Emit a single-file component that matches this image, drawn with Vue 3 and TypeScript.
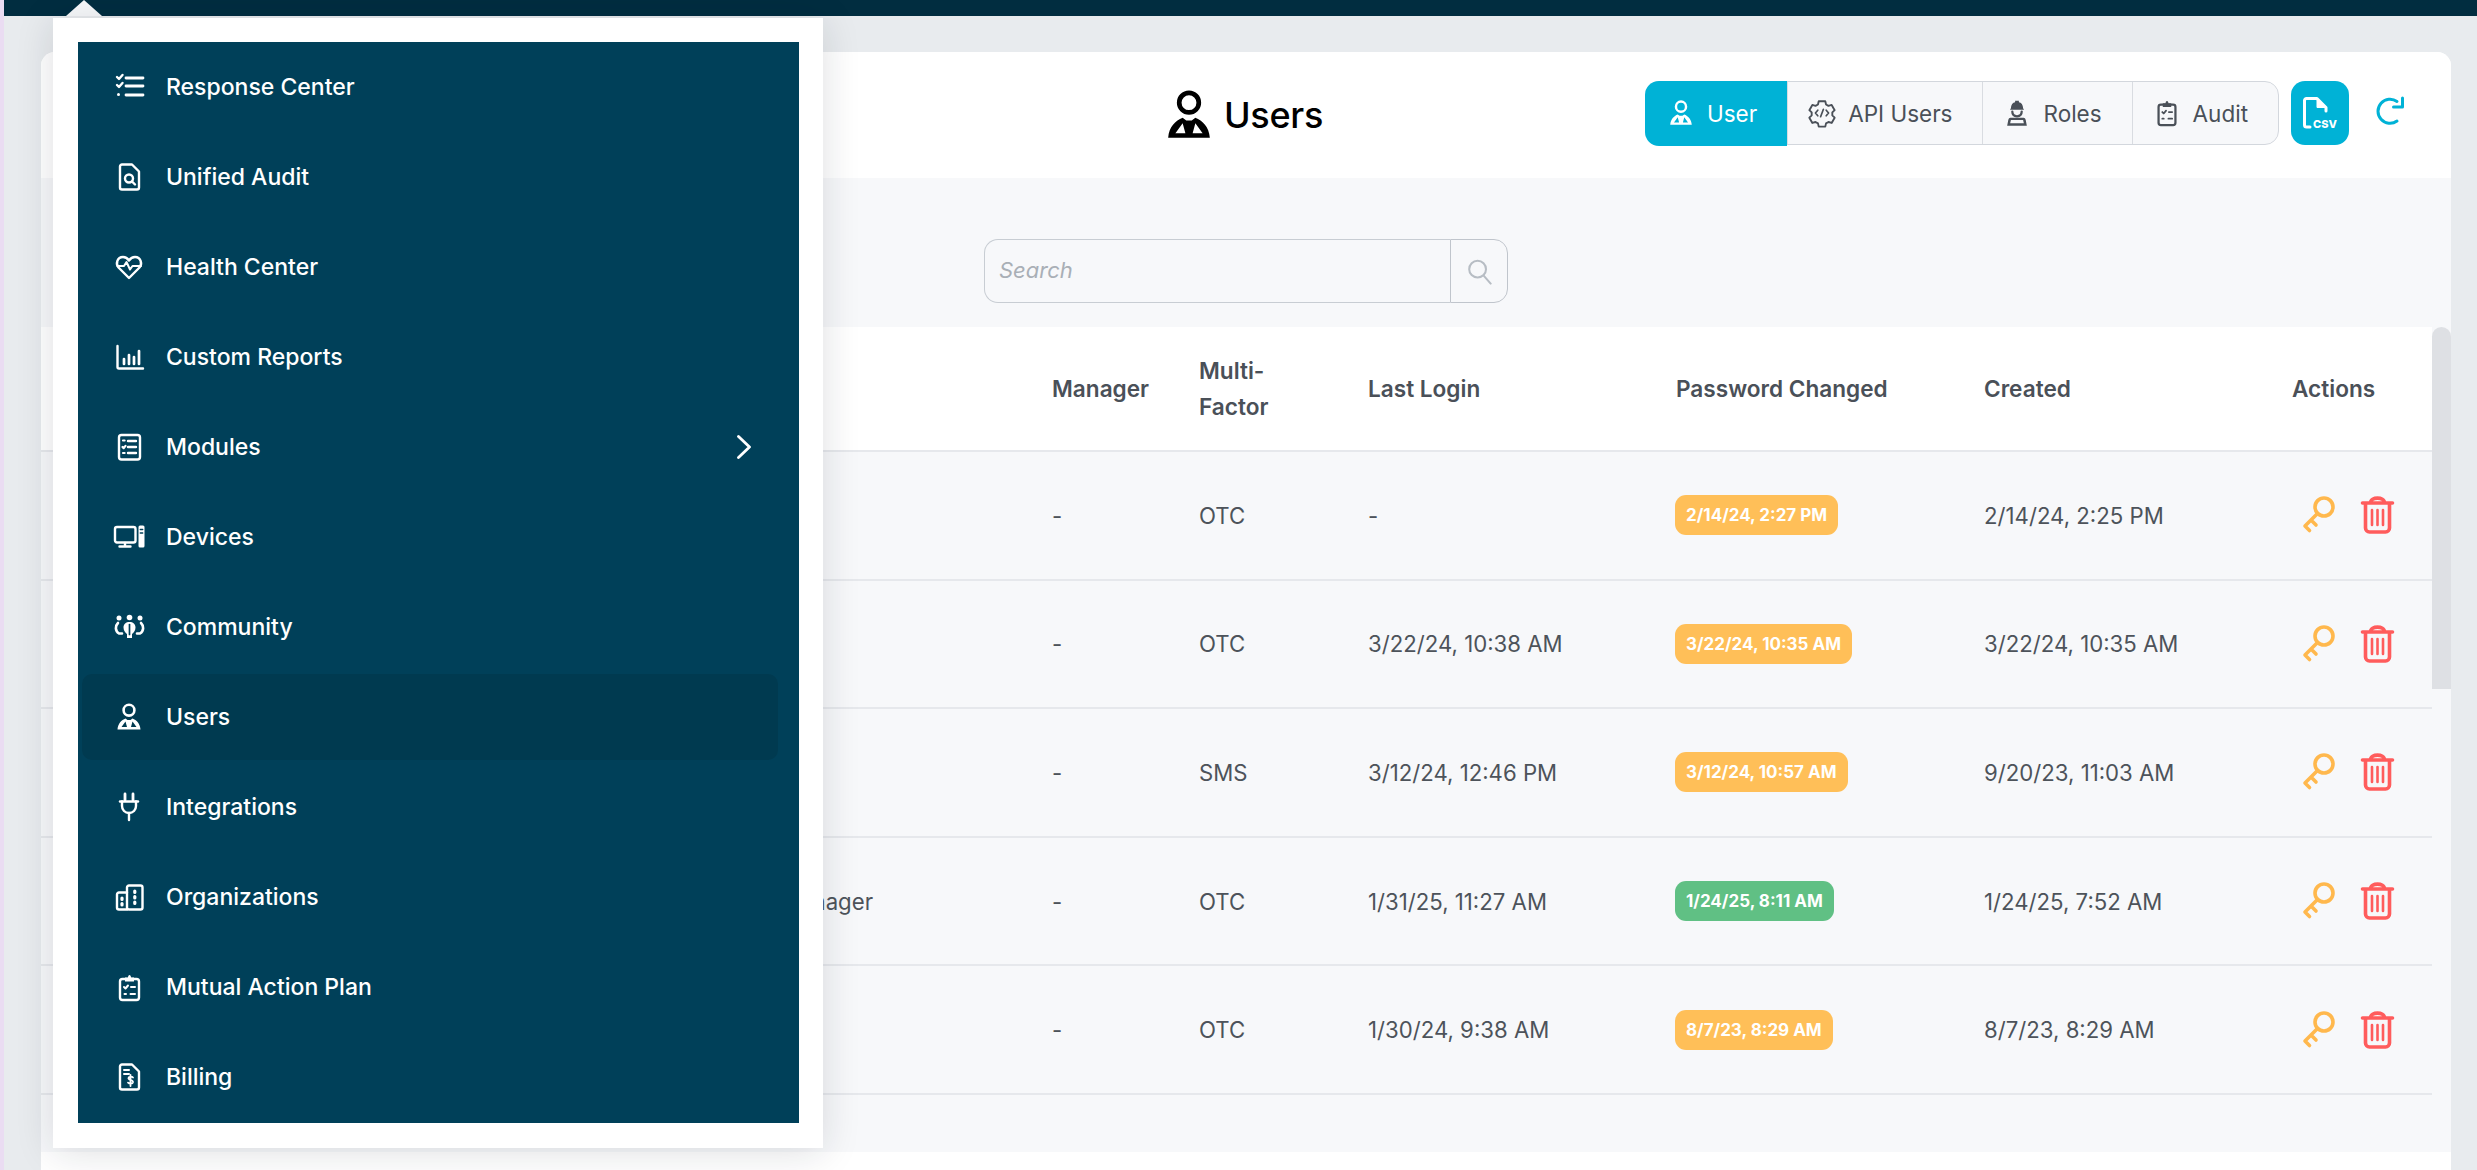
<script setup lang="ts">
const userIcon =
  '<circle cx="16" cy="9.200" r="5.400" stroke-width="2.600"/><path fill="currentColor" stroke="none" fill-rule="evenodd" d="M4.500 28.500C5 22.500 8.500 19 12.500 17.500L14.500 19h3l2-1.500C23.500 19 27 22.500 27.500 28.500zM8.500 26h5.500l-1.500-5.500zM23.500 26H18l1.500-5.500z"/>'

const icons: Record<string, string> = {
  tasks:
    '<path d="M4 6l2 2 3.500-4M4 14l2 2 3.500-4"/><path d="M13 7h17M13 15h17M13 24h17" stroke-width="2.800"/><circle cx="5.500" cy="23.500" r="1.500" fill="currentColor" stroke="none"/>',
  audit:
    '<path d="M19 3.500H9a2 2 0 0 0-2 2v21a2 2 0 0 0 2 2h15a2 2 0 0 0 2-2V10.500z"/><circle cx="16" cy="17.500" r="4"/><path d="M19 20.500l3 3"/>',
  health:
    '<path d="M16 27L5.500 16.500C2.500 13 4 6 10 6c3 0 5 2 6 3.500C17 8 19 6 22 6c6 0 7.500 7 4.500 10.500z"/><path d="M4.500 15H11l2.500-4 3.500 7.500 2.500-3.500h8.500" stroke-width="2"/>',
  reports:
    '<path d="M4.500 5v21a1.500 1.500 0 0 0 1.500 1.500h24"/><path d="M11 18v5M16 14v9M21 16v7M26 10v13" stroke-width="2.700"/>',
  modules:
    '<rect x="6" y="4" width="21" height="24.500" rx="2.500"/><path d="M15 10h8M15 16h8M15 22h8" stroke-width="2.400"/><path d="M10 9.500h1.600M9.500 16l1.200 1.200 1.800-2.400M10 22h1.600" stroke-width="2.200"/>',
  devices:
    '<rect x="2" y="6" width="20.500" height="15.500" rx="2"/><path d="M12 22v3M6.500 25.500h11"/><rect x="25.500" y="4.500" width="6" height="22" rx="1.500" fill="currentColor" stroke="none"/><path d="M27.300 8.500h2.400M27.300 12h2.400" stroke="#004059" stroke-width="1.400"/>',
  community:
    '<circle cx="6" cy="7" r="2.500" fill="currentColor" stroke="none"/><circle cx="16.500" cy="6.500" r="2.800" fill="currentColor" stroke="none"/><circle cx="27" cy="7" r="2.500" fill="currentColor" stroke="none"/><path d="M5 12c-3 3-3 8 1 10.500h3M28 12c3 3 3 8-1 10.500h-3" stroke-width="2.600"/><path fill="currentColor" stroke="none" d="M16.500 11c3.500 0 6 2 6 5.500 0 3-2 5.500-3.500 6.500v4h-5v-4c-1.500-1-3.500-3.500-3.500-6.500 0-3.500 2.500-5.500 6-5.500z"/><path d="M16.500 13.500v10" stroke="#004059" stroke-width="1.700"/>',
  user: userIcon,
  plug:
    '<path d="M12 3v6M20 3v6" stroke-width="2.800"/><path d="M7 10.500h18"/><path d="M9 10.500v4.500c0 4 3 7 7 7s7-3 7-7v-4.500"/><path d="M16 22v7"/>',
  org:
    '<rect x="14" y="4.500" width="15.500" height="24" rx="2"/><path d="M14 11.500H6a2 2 0 0 0-2 2v13a2 2 0 0 0 2 2h8"/><path d="M21.800 10v1.500M21.800 15.500v1.500M21.800 21v1.500M9 17v1.500M9 22.500v1.500" stroke-width="3.200"/>',
  clipboard:
    '<rect x="7" y="8" width="19" height="21" rx="2.500"/><path fill="currentColor" stroke="none" d="M12 6.500h3c0-3.500 3-3.500 3 0h3v4h-9z"/><path d="M11 16l1.500 1.500 2.500-3M18 16h4M11.500 23h1.500M17.500 23h4.500" stroke-width="2"/>',
  billing:
    '<path d="M19 3.500H9a2 2 0 0 0-2 2v21a2 2 0 0 0 2 2h15a2 2 0 0 0 2-2V10.500z"/><path d="M11 9h5M11 13h5" stroke-width="2"/><path d="M20 16.500c-.8-1-4-1.500-4.500.5-.5 2.500 4.800 1.500 4.500 4.200-.3 2-3.600 1.800-5 .5M17.500 14v11" stroke-width="1.800"/>',
  gear:
    '<path d="M12.500 3.500h7l.8 3.400 2.600 1.500 3.400-1 3.200 5.600-2.500 2.400v3.200l2.500 2.400-3.200 5.600-3.400-1-2.600 1.500-.8 3.400h-7l-.8-3.400-2.600-1.500-3.400 1-3.200-5.600 2.500-2.400v-3.200l-2.500-2.400 3.200-5.600 3.400 1 2.600-1.500z" stroke-width="2"/><path d="M11.500 13l-2.500 3 2.500 3M20.500 13l2.500 3-2.500 3M17.500 12l-3 8" stroke-width="1.800"/>',
  worker:
    '<path fill="currentColor" stroke="none" d="M9.500 11c0-4 2-6 4.500-6.500V3h4v1.500c2.500.5 4.500 2.500 4.500 6.500l1 1.500h-15z"/><path d="M11 14.500c0 3 2 5 5 5s5-2 5-5"/><path fill="currentColor" stroke="none" fill-rule="evenodd" d="M9 21h14c1.500 0 2 1 2.300 2.500l1.200 6H5.500l1.200-6C7 22 7.500 21 9 21zM9.500 23.500l-.8 3.500h14.600l-.8-3.500z"/>',
  clip2:
    '<rect x="7" y="7" width="18" height="22" rx="2.500"/><path fill="currentColor" stroke="none" d="M11.500 5.500h3c0-3 3-3 3 0h3v4h-9z"/><path d="M11 15l1.500 1.500 2.500-3M18 15h3.500M11 22h1.500M17.500 22h4" stroke-width="1.900"/>',
  search: '<circle cx="13.500" cy="13" r="9"/><path d="M20 20l7.500 8.500"/>'
}

interface MenuItem { label: string; icon: string; active?: boolean; more?: boolean }
const menu: MenuItem[] = [
  { label: 'Response Center', icon: 'tasks' },
  { label: 'Unified Audit', icon: 'audit' },
  { label: 'Health Center', icon: 'health' },
  { label: 'Custom Reports', icon: 'reports' },
  { label: 'Modules', icon: 'modules', more: true },
  { label: 'Devices', icon: 'devices' },
  { label: 'Community', icon: 'community' },
  { label: 'Users', icon: 'user', active: true },
  { label: 'Integrations', icon: 'plug' },
  { label: 'Organizations', icon: 'org' },
  { label: 'Mutual Action Plan', icon: 'clipboard' },
  { label: 'Billing', icon: 'billing' }
]

const tabs = [
  { label: 'User', icon: 'user', active: true },
  { label: 'API Users', icon: 'gear' },
  { label: 'Roles', icon: 'worker' },
  { label: 'Audit', icon: 'clip2' }
]

const rows = [
  { role: '', manager: '-', mfa: 'OTC', login: '-', pwd: '2/14/24, 2:27 PM', tone: 'warn', created: '2/14/24, 2:25 PM' },
  { role: '', manager: '-', mfa: 'OTC', login: '3/22/24, 10:38 AM', pwd: '3/22/24, 10:35 AM', tone: 'warn', created: '3/22/24, 10:35 AM' },
  { role: '', manager: '-', mfa: 'SMS', login: '3/12/24, 12:46 PM', pwd: '3/12/24, 10:57 AM', tone: 'warn', created: '9/20/23, 11:03 AM' },
  { role: 'Account Manager', manager: '-', mfa: 'OTC', login: '1/31/25, 11:27 AM', pwd: '1/24/25, 8:11 AM', tone: 'good', created: '1/24/25, 7:52 AM' },
  { role: '', manager: '-', mfa: 'OTC', login: '1/30/24, 9:38 AM', pwd: '8/7/23, 8:29 AM', tone: 'warn', created: '8/7/23, 8:29 AM' }
]
</script>

<template>
  <div class="app">
    <div class="topbar"></div>

    <main class="card">
      <header class="head">
        <div></div>
        <h1 class="title">
          <svg class="ico title-ico" viewBox="0 0 32 32" v-html="icons.user"></svg>
          <span>Users</span>
        </h1>
        <div class="head-actions">
          <nav class="tabs">
            <button v-for="t in tabs" :key="t.label" class="tab" :class="{ on: t.active }">
              <svg class="ico tab-ico" viewBox="0 0 32 32" v-html="icons[t.icon]"></svg>
              <span>{{ t.label }}</span>
            </button>
          </nav>
          <button class="csv">
            <svg class="csv-doc" viewBox="0 0 26 32">
              <path d="M7 30H3.500A2 2 0 0 1 1.500 28V3.500A2 2 0 0 1 3.500 1.500H14L23 10.500V14" />
              <path class="csv-fold" d="M14 1.500V10.500H23z" />
            </svg>
            <span class="csv-text">CSV</span>
          </button>
          <svg class="refresh" viewBox="0 0 30 30">
            <path d="M22 5.500A12 12 0 1 0 22 25" />
            <path d="M27.500 2v9h-9" />
          </svg>
        </div>
      </header>

      <section class="filters">
        <div class="search">
          <input class="search-input" placeholder="Search" />
          <button class="search-btn">
            <svg class="ico search-ico" viewBox="0 0 30 30" v-html="icons.search"></svg>
          </button>
        </div>
      </section>

      <section class="table-wrap">
        <div class="table">
          <div class="tr thead">
            <div></div>
            <div>Manager</div>
            <div class="narrow">Multi-Factor</div>
            <div>Last Login</div>
            <div>Password Changed</div>
            <div>Created</div>
            <div>Actions</div>
          </div>
          <div v-for="(r, i) in rows" :key="i" class="tr">
            <div class="role">{{ r.role }}</div>
            <div>{{ r.manager }}</div>
            <div>{{ r.mfa }}</div>
            <div>{{ r.login }}</div>
            <div><span class="badge" :class="r.tone">{{ r.pwd }}</span></div>
            <div>{{ r.created }}</div>
            <div class="acts">
              <svg class="act key" viewBox="0 0 40 40">
                <circle cx="24" cy="12" r="9" />
                <path d="M17.500 18.500L5 31l4.500 4.500M11 25l5 5" />
              </svg>
              <svg class="act trash" viewBox="0 0 40 40">
                <path d="M5.500 8h30M13.500 8c0-6.500 14-6.500 14 0M8.500 8v25a4 4 0 0 0 4 4h16a4 4 0 0 0 4-4V8" />
                <path d="M15 15v15M20.500 15v15M26 15v15" stroke-width="2.600" />
              </svg>
            </div>
          </div>
        </div>
        <div class="scroll"><div class="thumb"></div></div>
      </section>

      <footer class="foot"></footer>
    </main>

    <div class="caret"></div>
    <aside class="popover">
      <ul class="menu">
        <li v-for="m in menu" :key="m.label" class="item" :class="{ active: m.active }">
          <svg class="ico item-ico" viewBox="0 0 32 32" v-html="icons[m.icon]"></svg>
          <span class="item-label">{{ m.label }}</span>
          <svg v-if="m.more" class="chev" viewBox="0 0 16 24"><path d="M2.500 1.500L13.500 12 2.500 22.500" /></svg>
        </li>
      </ul>
    </aside>
  </div>
</template>

<style>
html, body { margin: 0; height: 100%; overflow: hidden; background: #e8ebee; }
</style>

<style scoped>
.app {
  position: relative;
  width: 2477px;
  height: 1170px;
  box-sizing: border-box;
  overflow: hidden;
  border-left: 4px solid #eadcf2;
  background: #e8ebee;
  font-family: Inter, "Liberation Sans", sans-serif;
  color: #4a5058;
  display: flex;
  flex-direction: column;
}
.topbar { height: 16px; background: #012d40; flex: none; }
.card {
  margin: 36px 26px 0 37px;
  flex: 1;
  display: flex;
  flex-direction: column;
  background: #fff;
  border-radius: 14px 14px 0 0;
  overflow: hidden;
}
.ico {
  fill: none;
  stroke: currentColor;
  stroke-width: 2.4;
  stroke-linecap: round;
  stroke-linejoin: round;
  flex: none;
}
.head {
  height: 126px;
  flex: none;
  display: grid;
  grid-template-columns: 1fr auto 1fr;
  align-items: center;
  background: #fff;
  box-sizing: border-box;
}
.title {
  margin: 0;
  padding-right: 9px;
  display: flex;
  align-items: center;
  gap: 6px;
  font-size: 36px;
  font-weight: 500;
  color: #000;
  letter-spacing: -0.3px;
}
.title-ico { width: 58px; height: 58px; }
.head-actions {
  display: flex;
  justify-content: flex-end;
  align-items: flex-start;
  padding: 0 46px 4px 0;
}
.tabs {
  display: flex;
  height: 64px;
  box-sizing: border-box;
  border: 1.5px solid #d3d7dd;
  border-radius: 14px;
  background: #f7f8fa;
}
.tab {
  display: flex;
  align-items: center;
  gap: 11px;
  padding: 0 30px 0 19px;
  border: 0;
  border-left: 1.5px solid #d9dce1;
  background: transparent;
  font: 400 22.5px Inter, "Liberation Sans", sans-serif;
  color: #4a5058;
}
.tab:first-child { border-left: 0; }
.tab.on {
  margin: -1.5px 0 -1.5px -1.5px;
  padding-left: 20.5px;
  padding-right: 30px;
  background: #00b2d6;
  color: #fff;
  border-radius: 14px 0 0 14px;
}
.tab-ico { width: 30px; height: 30px; }
.csv {
  width: 58px;
  height: 64px;
  margin-left: 12px;
  border: 0;
  border-radius: 14px;
  background: #00b2d6;
  position: relative;
  padding: 0;
}
.csv-doc {
  position: absolute;
  left: 12px;
  top: 16px;
  width: 26px;
  height: 32px;
  fill: none;
  stroke: #fff;
  stroke-width: 3;
  stroke-linejoin: round;
  stroke-linecap: round;
}
.csv-fold { fill: #fff; stroke-width: 1; }
.csv-text {
  position: absolute;
  left: 22px;
  top: 38px;
  font: 800 11px/11px Inter, "Liberation Sans", sans-serif;
  color: #fff;
}
.refresh {
  width: 30px;
  height: 30px;
  margin: 15px 0 0 26px;
  fill: none;
  stroke: #00b2d6;
  stroke-width: 3;
  stroke-linejoin: round;
  stroke-linecap: round;
}
.filters {
  height: 149px;
  flex: none;
  box-sizing: border-box;
  background: #f7f8fa;
  padding: 61px 0 0 943px;
}
.search { display: flex; width: 524px; height: 64px; }
.search-input {
  flex: 1;
  min-width: 0;
  box-sizing: border-box;
  border: 1.5px solid #c8cdd3;
  border-right: 0;
  border-radius: 14px 0 0 14px;
  background: #f7f8fa;
  padding: 0 14px 2px;
  font: italic 400 22px Inter, "Liberation Sans", sans-serif;
  outline: none;
}
.search-input::placeholder { color: #a9afb6; opacity: 1; }
.search-btn {
  width: 58px;
  border: 1.5px solid #c0c5cc;
  border-radius: 0 14px 14px 0;
  background: #f7f8fa;
  padding: 0;
  display: flex;
  align-items: center;
  justify-content: center;
}
.search-ico { width: 28px; height: 28px; color: #b7bdc4; stroke-width: 2.2; }
.table-wrap {
  height: 825px;
  flex: none;
  display: flex;
  background: #f7f8fa;
}
.table { flex: 1; min-width: 0; }
.tr {
  display: grid;
  grid-template-columns: 1011px 147px 169px 308px 308px 308px 1fr;
  align-items: center;
  height: 128.6px;
  box-sizing: border-box;
  border-bottom: 2px solid #e6e8ec;
  font-size: 22.2px;
  color: #4d535a;
}
.thead {
  height: 125px;
  background: #fff;
  font-size: 22.6px;
  font-weight: 600;
  color: #4a5058;
  line-height: 36px;
}
.narrow { width: min-content; }
.role { text-align: right; padding-right: 179px; }
.badge {
  display: inline-block;
  height: 40px;
  line-height: 40px;
  margin-left: -1px;
  padding: 0 11px;
  border-radius: 11px;
  font-size: 17px;
  font-weight: 700;
  color: #fff;
}
.warn { background: #ffbf58; }
.good { background: #60c084; }
.acts { display: flex; gap: 17px; padding-left: 8px; }
.act { width: 40px; height: 40px; fill: none; stroke-linecap: round; stroke-linejoin: round; stroke-width: 3.6; }
.key { stroke: #ffb84d; }
.trash { stroke: #ff5c5c; }
.scroll { width: 19px; flex: none; }
.thumb { height: 362px; background: #dee0e4; border-radius: 10px 10px 0 0; }
.foot { flex: 1; background: #fff; }
.caret {
  position: absolute;
  left: 62px;
  top: 0;
  width: 36px;
  height: 16px;
  background: #f7f8fa;
  clip-path: polygon(50% 0, 100% 100%, 0 100%);
}
.popover {
  position: absolute;
  left: 49px;
  top: 18px;
  width: 770px;
  height: 1130px;
  box-sizing: border-box;
  padding: 24px 24px 25px 25px;
  background: #fff;
  box-shadow: 0 4px 36px rgba(20, 30, 45, 0.14);
}
.menu {
  list-style: none;
  margin: 0;
  padding: 0;
  height: 100%;
  background: #004059;
}
.item {
  height: 86px;
  margin: 0 21px 4px 4px;
  padding: 0 26px 0 31px;
  position: relative;
  top: 2px;
  display: flex;
  align-items: center;
  gap: 21px;
  border-radius: 10px;
  color: #fff;
  font-size: 23px;
  font-weight: 500;
}
.item.active { background: #003a50; }
.item-ico { width: 32px; height: 32px; }
.item-label { flex: 1; }
.chev {
  width: 16px;
  height: 24px;
  fill: none;
  stroke: #fff;
  stroke-width: 2.8;
  stroke-linecap: round;
  stroke-linejoin: round;
}
</style>
